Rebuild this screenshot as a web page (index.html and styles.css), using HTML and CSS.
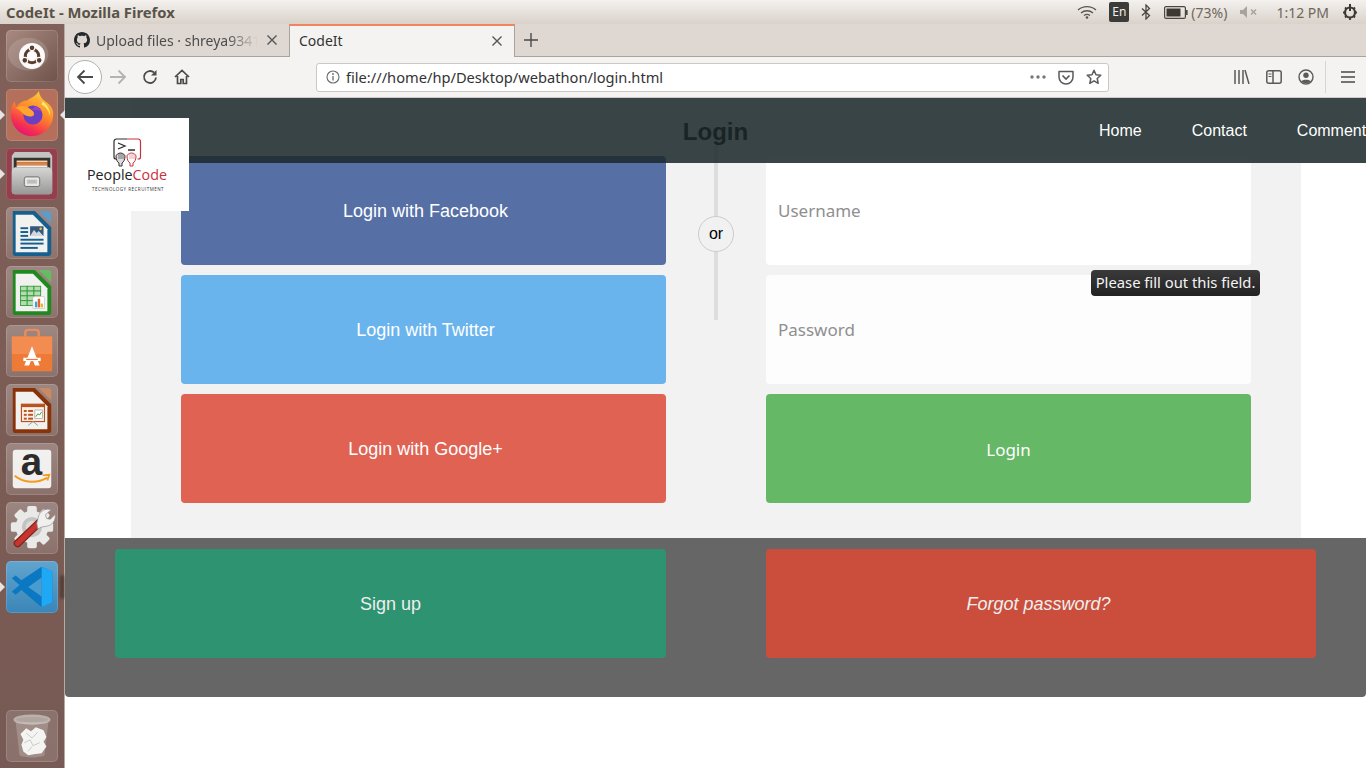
FILE: index.html
```html
<!DOCTYPE html>
<html lang="en">
<head>
  <meta charset="UTF-8">
  <title>CodeIt - Mozilla Firefox</title>
  <link rel="stylesheet" href="styles.css">
</head>
<body>
  <!-- Ubuntu top panel -->
  <div class="topbar">
    <span class="win-title">CodeIt - Mozilla Firefox</span>
    <div class="tray">
      <svg class="t-wifi" width="20" height="14" viewBox="0 0 20 14"><g fill="none" stroke="#5a544c" stroke-width="1.3"><path d="M1 5c5-4.500 13-4.500 18 0"/><path d="M4 8c3.500-3 8.500-3 12 0"/><path d="M7 10.500c1.800-1.400 4.200-1.400 6 0"/></g><circle cx="10" cy="12.500" r="1.300" fill="#5a544c"/></svg>
      <span class="t-lang">En</span>
      <svg class="t-bt" width="10" height="16" viewBox="0 0 10 16"><path d="M1 4.500l7.500 7L5 15V1l3.500 3.500L1 11.500" fill="none" stroke="#4a453e" stroke-width="1.300"/></svg>
      <svg class="t-batt" width="24" height="13" viewBox="0 0 24 13"><rect x=".6" y=".6" width="20.800" height="11.800" rx="1.500" fill="none" stroke="#4a453e" stroke-width="1.200"/><rect x="2.500" y="2.500" width="14" height="8" fill="#3c3833"/><rect x="22" y="4" width="1.600" height="5" fill="#4a453e"/></svg>
      <span class="t-pct">(73%)</span>
      <svg class="t-vol" width="18" height="12" viewBox="0 0 18 12"><path d="M0 4h3l4-4v12L3 8H0z" fill="#a9a39b"/><path d="M11 3.500l5 5m0-5l-5 5" stroke="#a9a39b" stroke-width="1.500"/></svg>
      <span class="t-time">1:12 PM</span>
      <svg class="t-gear" width="16" height="16" viewBox="0 0 16 16"><circle cx="8" cy="8.500" r="5" fill="none" stroke="#3c3833" stroke-width="2.200"/><path d="M8 0v7" stroke="#3c3833" stroke-width="2"/><path d="M1 8.500h2M13 8.500h2M3 3.500l1.500 1.500M13 3.500L11.500 5M3 13.500L4.500 12M13 13.500L11.500 12M8 14v2" stroke="#3c3833" stroke-width="1.800"/></svg>
    </div>
  </div>

  <div class="desktop">
    <!-- launcher -->
    <aside class="launcher">
      <div class="tile tile-ubuntu">
        <svg viewBox="0 0 52 52"><ellipse cx="22" cy="24" rx="21" ry="17" fill="#fff" opacity=".14"/><circle cx="26" cy="26" r="13.500" fill="#fdfbfa"/><circle cx="26" cy="26" r="7" fill="none" stroke="#5b3c30" stroke-width="3.200"/><g fill="#5b3c30" stroke="#fdfbfa" stroke-width="1.200"><circle cx="26" cy="17.500" r="3"/><circle cx="18.500" cy="30.500" r="3"/><circle cx="33.500" cy="30.500" r="3"/></g></svg>
      </div>
      <div class="tile tile-firefox running focused">
        <svg viewBox="0 0 52 52"><defs><linearGradient id="ff1" x1=".8" y1="0" x2=".3" y2="1"><stop offset="0" stop-color="#ffd23f"/><stop offset=".45" stop-color="#ff8a2a"/><stop offset=".8" stop-color="#f5314f"/><stop offset="1" stop-color="#e3127a"/></linearGradient></defs><path d="M4 25c0-5 1-10 4-13 0 2 1 4 2 5 3-4 7-6 11-6 3-3 9-4 12-10 1 5 3 8 7 11 6 4 9 9 8 15-1 12-11 21-22 21C14 48 4 38 4 25z" fill="url(#ff1)"/><circle cx="27" cy="26" r="10" fill="#6b3fc4"/><path d="M29 17a10 10 0 0 1 7 6c-3-2-8-3-11-1z" fill="#a13fc0"/><path d="M9 19c5-4 11-3 14 0 3 2 6 4 5 7-3 3-8 1-11-1-2-2-4-5-8-6z" fill="#ffa42e"/><path d="M37 12c5 3 8 9 8 15-2-6-5-10-9-12z" fill="#ffe866"/></svg>
      </div>
      <div class="tile tile-files running">
        <svg viewBox="0 0 52 52"><defs><linearGradient id="cab" x1="0" y1="0" x2="0" y2="1"><stop offset="0" stop-color="#d6d6d4"/><stop offset="1" stop-color="#989896"/></linearGradient></defs><path d="M5 7l3-4h36l3 4v37a3 3 0 0 1-3 3H8a3 3 0 0 1-3-3z" fill="#c4c4c2"/><path d="M7 9h38v11H7z" fill="#35322f"/><rect x="10" y="12" width="32" height="2" fill="#f9d3a8"/><rect x="10" y="14" width="32" height="3" fill="#e8803f"/><rect x="10" y="17" width="32" height="2" fill="#f3f0ea"/><path d="M8 19h36l3 4v21a3 3 0 0 1-3 3H8a3 3 0 0 1-3-3V23z" fill="url(#cab)"/><rect x="18" y="29" width="16" height="10" rx="2" fill="#e6e6e6" stroke="#6e6e6e" stroke-width="1"/><rect x="21" y="32" width="10" height="4" fill="#bdbdbd"/></svg>
      </div>
      <div class="tile">
        <svg viewBox="0 0 52 52"><path d="M6 3h23l17 17v27a3 3 0 0 1-3 3H9a3 3 0 0 1-3-3z" fill="#15608f"/><path d="M33 3h10a3 3 0 0 1 3 3v10z" fill="#5d9cc4"/><path d="M9 7h18l15 15v24H9z" fill="#f1f1ef"/><g fill="#15608f"><rect x="14" y="20" width="8" height="2"/><rect x="14" y="24" width="8" height="2"/><rect x="14" y="28" width="8" height="2"/><rect x="14" y="32" width="24" height="2"/><rect x="14" y="36" width="24" height="2"/><rect x="14" y="40.500" width="18" height="2"/></g><rect x="24" y="19" width="14" height="10" fill="#36587a"/><path d="M24 29l4-6 3 3 2-2 5 5z" fill="#cfd8df"/><circle cx="35" cy="21.500" r="1.300" fill="#f0c040"/></svg>
      </div>
      <div class="tile">
        <svg viewBox="0 0 52 52"><path d="M6 3h23l17 17v27a3 3 0 0 1-3 3H9a3 3 0 0 1-3-3z" fill="#1f8a1f"/><path d="M33 3h10a3 3 0 0 1 3 3v10z" fill="#63bd63"/><path d="M9 7h18l15 15v24H9z" fill="#f1f1ef"/><g fill="#b5dcb0" stroke="#2f9a35" stroke-width=".9"><rect x="14" y="20" width="7" height="5"/><rect x="21" y="20" width="7" height="5"/><rect x="28" y="20" width="7" height="5"/><rect x="14" y="25" width="7" height="5"/><rect x="21" y="25" width="7" height="5"/><rect x="28" y="25" width="7" height="5"/><rect x="14" y="30" width="7" height="5"/><rect x="21" y="30" width="7" height="5"/><rect x="14" y="35" width="7" height="5"/><rect x="21" y="35" width="7" height="5"/></g><rect x="27" y="31" width="12" height="12" fill="#fff" stroke="#bbb" stroke-width=".6"/><rect x="29" y="36" width="2.500" height="6" fill="#3fa0dc"/><rect x="32" y="33" width="2.500" height="9" fill="#e0662b"/><rect x="35" y="38" width="2.500" height="4" fill="#f0b030"/></svg>
      </div>
      <div class="tile">
        <svg viewBox="0 0 52 52"><path d="M19 12V7a3 3 0 0 1 3-3h8a3 3 0 0 1 3 3v5" fill="none" stroke="#e88c5a" stroke-width="2.500"/><path d="M5 11h42v36H5z" fill="#ee7a38"/><path d="M5 11h42v18H5z" fill="#f38c50"/><path d="M26 21l-8 20h5l3-8 3 8h5z" fill="#fff"/><rect x="17" y="33" width="18" height="3.500" fill="#fff"/><rect x="20" y="34.200" width="12" height="1.200" fill="#ee7a38"/></svg>
      </div>
      <div class="tile">
        <svg viewBox="0 0 52 52"><path d="M6 3h23l17 17v27a3 3 0 0 1-3 3H9a3 3 0 0 1-3-3z" fill="#8a3208"/><path d="M33 3h10a3 3 0 0 1 3 3v10z" fill="#c98a66"/><path d="M9 7h18l15 15v24H9z" fill="#f1f1ef"/><rect x="15" y="20" width="24" height="18" fill="#fbeee5" stroke="#b7521e" stroke-width="1.200"/><rect x="15" y="20" width="24" height="3" fill="#b7521e"/><g fill="#b7521e"><rect x="17.500" y="26" width="3" height="2"/><rect x="22" y="26" width="5" height="2"/><rect x="17.500" y="30" width="3" height="2"/><rect x="22" y="30" width="5" height="2"/><rect x="17.500" y="34" width="3" height="2"/><rect x="22" y="34" width="5" height="2"/></g><rect x="29" y="26" width="8" height="9" fill="#fff" stroke="#999" stroke-width=".7"/><path d="M30 33l2-3 2 1 2-3" fill="none" stroke="#3a9a3a" stroke-width="1"/><path d="M27 38l-5 4m5-4l5 4" stroke="#999" stroke-width="1"/></svg>
      </div>
      <div class="tile">
        <svg viewBox="0 0 52 52"><rect x="6" y="6" width="40" height="40" rx="3" fill="#f1f0ee"/><text class="amz-a" x="25.500" y="32" text-anchor="middle">a</text><path d="M8 33c10 8 24 8 34 2" fill="none" stroke="#f59b1c" stroke-width="2.200"/><path d="M37 32.500l7-.5-2 6" fill="none" stroke="#f59b1c" stroke-width="1.800"/></svg>
      </div>
      <div class="tile">
        <svg viewBox="0 0 52 52"><g fill="#e9e9e7"><circle cx="26" cy="25" r="17"/><rect x="21" y="3" width="10" height="44" rx="2"/><rect x="4" y="20" width="44" height="10" rx="2"/><rect x="21" y="3" width="10" height="44" rx="2" transform="rotate(45 26 25)"/><rect x="21" y="3" width="10" height="44" rx="2" transform="rotate(-45 26 25)"/></g><circle cx="26" cy="25" r="10.500" fill="#c4c3c0"/><circle cx="26" cy="25" r="6.500" fill="#dcdbd8"/><path d="M11 42L34 20" stroke="#7e2420" stroke-width="8" stroke-linecap="round"/><path d="M11 42L34 20" stroke="#c8352e" stroke-width="5.500" stroke-linecap="round"/><path d="M31 21l2-8c2-5 8-8 13-6l-6 5 1 4 4 1 5-5c1 6-3 11-8 12l-6 1-4 2z" fill="#f0f0ee" stroke="#8e8e8c" stroke-width=".7"/></svg>
      </div>
      <div class="tile tile-code running">
        <svg viewBox="0 0 52 52"><path d="M36 5L47 10v32l-11 5-21-18-6 5-4-3 8-7-8-7 4-3 6 5z" fill="#0a78c2"/><path d="M36 5l11 5v32l-11 5z" fill="#1fa8f3"/><path d="M36 16L22 26l14 10z" fill="#4a9ccf"/></svg>
      </div>
      <div class="tile tile-trash">
        <svg viewBox="0 0 52 52"><path d="M9 12l4 34c4 3 22 3 26 0l4-34" fill="#fff" opacity=".2"/><ellipse cx="26" cy="9" rx="18" ry="4" fill="#cfcfcb" opacity=".55" stroke="#e4e4e0" stroke-width="2.500"/><g fill="#f4f4f2"><path d="M14 24l6-6 5 3 5-4 8 3 3 7-3 5 3 5-5 7-8 1-6 1-5-4-2-7 2-5z"/></g><g fill="none" stroke="#c9c9c5" stroke-width="1"><path d="M20 23l6 5 6-6M18 33l6-3 3 6 7-3M22 42l4-5"/></g></svg>
      </div>
    </aside>

    <div class="browser">
      <!-- tabs -->
      <div class="tabs">
        <div class="tab">
          <svg width="16" height="16" viewBox="0 0 16 16"><path fill="#24292e" d="M8 0C3.580 0 0 3.580 0 8c0 3.540 2.290 6.530 5.470 7.590.4.070.55-.17.55-.38 0-.19-.01-.82-.01-1.490-2.010.37-2.530-.49-2.690-.94-.09-.23-.48-.94-.82-1.130-.28-.15-.68-.52-.01-.53.63-.01 1.080.58 1.230.82.720 1.210 1.870.87 2.330.66.070-.52.280-.87.510-1.070-1.780-.2-3.640-.89-3.640-3.950 0-.87.310-1.590.820-2.150-.08-.2-.36-1.020.08-2.120 0 0 .67-.21 2.200.82.640-.18 1.320-.27 2-.27s1.360.09 2 .27c1.530-1.040 2.200-.82 2.200-.82.440 1.100.160 1.920.080 2.120.51.560.82 1.270.82 2.150 0 3.070-1.870 3.750-3.650 3.950.29.250.54.730.54 1.480 0 1.070-.01 1.930-.01 2.200 0 .21.15.46.55.38A8.010 8.010 0 0 0 16 8c0-4.420-3.580-8-8-8z"/></svg>
          <span class="tab-label fade">Upload files · shreya9341</span>
          <svg class="tab-x" width="10" height="10" viewBox="0 0 10 10"><path d="M.5.500l9 9m0-9l-9 9" stroke="#555" stroke-width="1.400"/></svg>
        </div>
        <div class="tab tab-active">
          <span class="tab-label">CodeIt</span>
          <svg class="tab-x" width="10" height="10" viewBox="0 0 10 10"><path d="M.5.500l9 9m0-9l-9 9" stroke="#555" stroke-width="1.400"/></svg>
        </div>
        <svg class="tab-new" width="14" height="14" viewBox="0 0 14 14"><path d="M7 0v14M0 7h14" stroke="#4a4a4a" stroke-width="1.400"/></svg>
      </div>

      <!-- nav toolbar -->
      <div class="toolbar">
        <div class="back-btn">
          <svg width="18" height="16" viewBox="0 0 18 16"><path d="M17 8H2M8.500 1.500L2 8l6.500 6.500" fill="none" stroke="#4a4a4a" stroke-width="1.800"/></svg>
        </div>
        <div class="tb-icon"><svg width="18" height="16" viewBox="0 0 18 16"><path d="M1 8h15M9.500 1.500L16 8l-6.500 6.500" fill="none" stroke="#b3b3b3" stroke-width="1.800"/></svg></div>
        <div class="tb-icon"><svg width="16" height="16" viewBox="0 0 16 16"><path d="M14 8.500A6 6 0 1 1 12 3.500" fill="none" stroke="#4a4a4a" stroke-width="1.800"/><path d="M14.500 1v5.500H9z" fill="#4a4a4a"/></svg></div>
        <div class="tb-icon"><svg width="16" height="16" viewBox="0 0 16 16"><path d="M1 8l7-6.500L15 8M3.500 7v7.500h3.300v-4h2.400v4h3.300V7" fill="none" stroke="#4a4a4a" stroke-width="1.700"/></svg></div>
        <div class="urlbar">
          <svg class="url-info" width="14" height="14" viewBox="0 0 14 14"><circle cx="7" cy="7" r="6" fill="none" stroke="#6a6a6a" stroke-width="1.100"/><path d="M7 6v4.500" stroke="#6a6a6a" stroke-width="1.300"/><circle cx="7" cy="4" r=".9" fill="#6a6a6a"/></svg>
          <span class="url-text">file:///home/hp/Desktop/webathon/login.html</span>
          <svg class="url-dots" width="16" height="4" viewBox="0 0 16 4"><g fill="#777"><circle cx="2" cy="2" r="1.700"/><circle cx="8" cy="2" r="1.700"/><circle cx="14" cy="2" r="1.700"/></g></svg>
          <svg class="url-pocket" width="16" height="15" viewBox="0 0 16 15"><path d="M1 1.500h14V7a7 7 0 0 1-14 0z" fill="none" stroke="#5a5a5a" stroke-width="1.500" stroke-linejoin="round"/><path d="M4.500 5.500L8 9l3.500-3.500" fill="none" stroke="#5a5a5a" stroke-width="1.700"/></svg>
          <svg class="url-star" width="16" height="16" viewBox="0 0 16 16"><path d="M8 1.300l2 4.500 4.800.5-3.600 3.200 1 4.800L8 11.800l-4.200 2.500 1-4.800L1.200 6.300 6 5.800z" fill="none" stroke="#5a5a5a" stroke-width="1.500" stroke-linejoin="round"/></svg>
        </div>
        <div class="tb-right">
          <div class="tb-icon"><svg width="16" height="14" viewBox="0 0 16 14"><path d="M1 0v14M5 0v14M9 0v14M11 0l4 14" stroke="#5a5a5a" stroke-width="1.500" fill="none"/></svg></div>
          <div class="tb-icon"><svg width="16" height="14" viewBox="0 0 16 14"><rect x=".8" y=".8" width="14.400" height="12.400" rx="2" fill="none" stroke="#5a5a5a" stroke-width="1.500"/><path d="M7 1v12" stroke="#5a5a5a" stroke-width="1.500"/><path d="M2.500 4h3M2.500 6.500h3" stroke="#5a5a5a"/></svg></div>
          <div class="tb-icon"><svg width="16" height="16" viewBox="0 0 16 16"><circle cx="8" cy="8" r="7" fill="none" stroke="#5a5a5a" stroke-width="1.400"/><circle cx="8" cy="6.300" r="2.700" fill="#5a5a5a"/><path d="M3 12.500c1.500-2.500 8.500-2.500 10 0-2 2-8 2-10 0z" fill="#5a5a5a"/></svg></div>
          <div class="tb-sep"></div>
          <div class="tb-icon"><svg width="14" height="12" viewBox="0 0 14 12"><path d="M0 1h14M0 6h14M0 11h14" stroke="#4a4a4a" stroke-width="1.500"/></svg></div>
        </div>
      </div>

      <!-- the login page -->
      <div class="page">
        <header class="site-header">
          <nav class="site-nav">
            <a href="#">Home</a>
            <a href="#">Contact</a>
            <a href="#">Comments</a>
          </nav>
        </header>

        <div class="logo">
          <svg width="30" height="30" viewBox="0 0 30 30">
            <path d="M14 1H3.500A2.500 2.500 0 0 0 1 3.500V19c0 1 .8 2 2 2h1" fill="none" stroke="#2c2c2e" stroke-width="1.200"/>
            <path d="M14 1h11A2.500 2.500 0 0 1 27.500 3.500V19c0 1-.8 2-2 2h-1" fill="none" stroke="#c9303c" stroke-width="1.200"/>
            <path d="M5 5l7 3-7 3" fill="none" stroke="#2c2c2e" stroke-width="1.300"/>
            <path d="M15 12h7" stroke="#2c2c2e" stroke-width="1.500"/>
            <path d="M6 28v-3c-2-1-3-4-3-7 0-1 2-3 4.500-3s4.500 2 4.500 3c0 3-1 6-3 7v3z" fill="#dcdcdc" stroke="#333" stroke-width="1"/>
            <path d="M6 15v6M8 15v6M10 16v5" stroke="#555" stroke-width=".8"/>
            <path d="M17 28v-3c-2-1-3-4-3-7 0-1 2-3 4.500-3s4.500 2 4.500 3c0 3-1 6-3 7v3z" fill="#fff" stroke="#c9303c" stroke-width="1"/>
            <path d="M17 15v6M19 15v6M21 16v5" stroke="#e58d94" stroke-width=".8"/>
          </svg>
          <span class="logo-name">People<em>Code</em></span>
          <span class="logo-tag">TECHNOLOGY RECRUITMENT</span>
        </div>

        <section class="login-panel">
          <h2>Login</h2>
          <div class="vl"><span class="vl-or">or</span></div>
          <div class="login-row">
            <div class="login-col">
              <a class="btn btn-social btn-fb" href="#">Login with Facebook</a>
              <a class="btn btn-social btn-tw" href="#">Login with Twitter</a>
              <a class="btn btn-social btn-g" href="#">Login with Google+</a>
            </div>
            <div class="login-col">
              <input class="field field-user" type="text" placeholder="Username">
              <input class="field field-pass" type="password" placeholder="Password">
              <a class="btn btn-login" href="#">Login</a>
            </div>
          </div>
        </section>

        <section class="bottom-box">
          <a class="btn btn-signup" href="#">Sign up</a>
          <a class="btn btn-forgot" href="#">Forgot password?</a>
        </section>

        <div class="validation-tip">Please fill out this field.</div>
      </div>
    </div>
  </div>
</body>
</html>
```

FILE: styles.css
```css
/* Global */
* {
  box-sizing: border-box;
}

html, body {
  height: 100%;
}

body {
  margin: 0;
  overflow: hidden;
  font-family: "Liberation Sans", Arial, sans-serif;
  background-color: #fff;
}

a {
  text-decoration: none;
}

/* Ubuntu top panel */
.topbar {
  height: 24px;
  display: flex;
  align-items: center;
  justify-content: space-between;
  padding-left: 6px;
  background: linear-gradient(#f4f1ee, #d9d2ca);
  font-family: "Noto Sans", sans-serif;
}

.win-title {
  font-size: 14.800px;
  font-weight: 700;
  color: #5a5347;
}

.tray {
  display: flex;
  align-items: center;
  height: 24px;
  font-size: 14px;
  color: #6f675c;
}

.t-wifi {
  margin-right: 12px;
}

.t-lang {
  width: 20px;
  height: 20px;
  margin-right: 12px;
  line-height: 20px;
  text-align: center;
  border-radius: 2px;
  background-color: #3c3b37;
  color: #eee;
  font-size: 12px;
}

.t-bt {
  margin-right: 13px;
}

.t-batt {
  margin-right: 3px;
}

.t-pct {
  margin-right: 13px;
}

.t-vol {
  margin-right: 18px;
}

.t-time {
  margin-right: 13px;
}

.t-gear {
  margin-right: 8px;
}

/* Desktop */
.desktop {
  display: flex;
  height: 744px;
}

.launcher {
  width: 65px;
  flex-shrink: 0;
  display: flex;
  flex-direction: column;
  gap: 7px;
  padding: 6px 0 6px 6px;
  background: linear-gradient(#806059, #775a53);
  border-right: 1px solid #b9a8a3;
}

.tile {
  position: relative;
  width: 52px;
  height: 52px;
  padding: 1px;
  border-radius: 5px;
  background: linear-gradient(rgba(255, 255, 255, 0.26), rgba(255, 255, 255, 0.13));
  box-shadow: inset 0 0 0 1px rgba(255, 255, 255, 0.14);
}

.tile svg {
  display: block;
  width: 50px;
  height: 50px;
  overflow: visible;
}

.tile-ubuntu {
  background: linear-gradient(135deg, #a88a80, #6f534b);
}

.tile-firefox {
  background: #b4705a;
}

.tile-files {
  background: #933f4c;
}

.tile-code {
  background: linear-gradient(#62a4cf, #3a86b8);
}

.tile-trash {
  margin-top: auto;
  background: rgba(255, 255, 255, 0.14);
}

.amz-a {
  font-family: "Liberation Sans", sans-serif;
  font-size: 40px;
  font-weight: 700;
  fill: #2b2b2b;
}

/* little white pips next to open apps */
.running::before {
  content: "";
  position: absolute;
  left: -6px;
  top: 21px;
  border: 5px solid transparent;
  border-left-color: #e8e4e2;
  border-right-width: 0;
}

.focused::after {
  content: "";
  position: absolute;
  right: -7px;
  top: 21px;
  border: 5px solid transparent;
  border-right-color: #e8e4e2;
  border-left-width: 0;
}

/* dark smudge next to the code tile */
.tile-code::after {
  content: "";
  position: absolute;
  right: -6px;
  top: 14px;
  width: 4px;
  height: 24px;
  border-radius: 2px;
  background-color: #4d3a35;
  filter: blur(1.500px);
}

/* Browser */
.browser {
  flex: 1;
  display: flex;
  flex-direction: column;
  min-width: 0;
}

.tabs {
  height: 33px;
  display: flex;
  align-items: stretch;
  background-color: #dfd7d1;
  border-bottom: 1px solid #a9a39d;
  font-family: "Noto Sans", sans-serif;
  font-size: 14px;
}

.tab {
  width: 224px;
  display: flex;
  align-items: center;
  gap: 6px;
  padding: 0 12px 0 9px;
  color: #4d4d4d;
}

.tab-active {
  width: 226px;
  margin-bottom: -1px;
  padding: 0 12px 2px 9px;
  background-color: #f5f3f1;
  border-top: 2px solid #f0845c;
  border-right: 1px solid #a9a39d;
  border-left: 1px solid #a9a39d;
  color: #333;
}

.tab-label {
  flex: 1;
  overflow: hidden;
  white-space: nowrap;
}

.fade {
  -webkit-mask-image: linear-gradient(to right, #000 80%, transparent 98%);
  mask-image: linear-gradient(to right, #000 80%, transparent 98%);
}

.tab-new {
  align-self: center;
  margin-left: 9px;
}

.toolbar {
  height: 41px;
  display: flex;
  align-items: center;
  padding-left: 3px;
  background-color: #f5f3f1;
  border-bottom: 1px solid #cfcac6;
}

.back-btn {
  width: 34px;
  height: 34px;
  display: flex;
  align-items: center;
  justify-content: center;
  background-color: #fff;
  border: 1px solid #b1b1b1;
  border-radius: 50%;
}

.tb-icon {
  width: 32px;
  height: 32px;
  display: flex;
  align-items: center;
  justify-content: center;
}

.urlbar {
  width: 793px;
  height: 29px;
  margin-left: 118px;
  display: flex;
  align-items: center;
  padding: 0 6px 0 9px;
  background-color: #fff;
  border: 1px solid #ccc8c4;
  border-radius: 3px;
}

.url-text {
  flex: 1;
  margin-left: 6px;
  font-family: "Noto Sans", sans-serif;
  font-size: 14.650px;
  color: #333;
}

.url-dots {
  margin-right: 12px;
}

.url-pocket {
  margin-right: 12px;
}

.tb-right {
  display: flex;
  align-items: center;
  margin-left: 117px;
}

.tb-sep {
  width: 1px;
  height: 32px;
  margin: 0 6px 0 3px;
  background-color: #d8d4d0;
}

/* Page */
.page {
  position: relative;
  flex: 1;
  overflow: hidden;
  background-color: #fff;
}

.site-header {
  position: absolute;
  top: 0;
  left: 0;
  right: 0;
  z-index: 2;
  height: 65px;
  background-color: rgba(28, 41, 43, 0.87);
}

.site-nav {
  display: flex;
  gap: 50px;
  padding: 24px 0 0 1034px;
  white-space: nowrap;
}

.site-nav a {
  font-size: 16px;
  color: #fff;
}

.logo {
  position: absolute;
  top: 20px;
  left: 0;
  z-index: 3;
  width: 124px;
  height: 93px;
  display: flex;
  flex-direction: column;
  align-items: center;
  padding: 20px 0 0;
  background-color: #fff;
}

.logo svg {
  margin-left: 1px;
}

.logo-name {
  margin-top: -2px;
  font-family: "Open Sans", sans-serif;
  font-size: 14.300px;
  line-height: 18px;
  color: #232325;
}

.logo-name em {
  font-style: normal;
  color: #c9303c;
}

.logo-tag {
  margin-top: 1px;
  margin-left: 2px;
  font-family: "Open Sans", sans-serif;
  font-size: 4.500px;
  line-height: 8px;
  letter-spacing: .5px;
  color: #333;
}

.login-panel {
  position: relative;
  margin: 0 65px 0 66px;
  padding: 20px 50px 35px;
  background-color: #f2f2f2;
}

.login-panel h2 {
  margin: 0 0 10px;
  padding-right: 1px;
  font-size: 24px;
  line-height: 28px;
  text-align: center;
  color: #000;
}

.vl {
  position: absolute;
  top: 47px;
  left: 583px;
  width: 4px;
  height: 175px;
  background-color: #ddd;
}

.vl-or {
  position: absolute;
  top: 71px;
  left: -16px;
  width: 36px;
  height: 36px;
  line-height: 34px;
  text-align: center;
  font-size: 16px;
  color: #000;
  background-color: #f1f1f1;
  border: 1px solid #ccc;
  border-radius: 50%;
}

.login-row {
  display: grid;
  grid-template-columns: 485px 485px;
  gap: 100px;
}

.login-col {
  display: flex;
  flex-direction: column;
  gap: 10px;
}

.btn {
  height: 109px;
  display: flex;
  align-items: center;
  justify-content: center;
  padding-top: 2px;
  font-size: 18px;
  color: #fff;
  border-radius: 4px;
}

.btn-social {
  padding-left: 4px;
}

.btn-fb {
  background-color: #5670a6;
}

.btn-tw {
  background-color: #6ab4ee;
}

.btn-g {
  background-color: #e06253;
}

.btn-login {
  background-color: #64b866;
  font-family: "Noto Sans", sans-serif;
  font-size: 17px;
}

.field {
  height: 109px;
  padding: 0 12px;
  border: none;
  border-radius: 4px;
  font-family: "Noto Sans", sans-serif;
  font-size: 17px;
}

.field::placeholder {
  color: #8f8f8f;
  opacity: 1;
}

.field-user {
  background-color: #fff;
}

.field-pass {
  background-color: #fdfdfd;
}

.bottom-box {
  display: grid;
  grid-template-columns: 551px 550px;
  gap: 100px;
  height: 159px;
  padding: 11px 50px 0;
  background-color: #666;
  border-radius: 0 0 4px 4px;
}

.btn-signup {
  background-color: #2d9371;
  color: #eee;
}

.btn-forgot {
  padding-right: 5px;
  background-color: #cb4e3c;
  color: #eee;
  font-style: italic;
}

/* browser validation bubble */
.validation-tip {
  position: absolute;
  top: 172px;
  left: 1026px;
  z-index: 4;
  width: 169px;
  height: 26px;
  line-height: 25px;
  text-align: center;
  white-space: nowrap;
  font-family: "Noto Sans", sans-serif;
  font-size: 14.800px;
  color: #f4f4f4;
  background: linear-gradient(#3a3a3a, #222);
  border-radius: 4px;
}
```
